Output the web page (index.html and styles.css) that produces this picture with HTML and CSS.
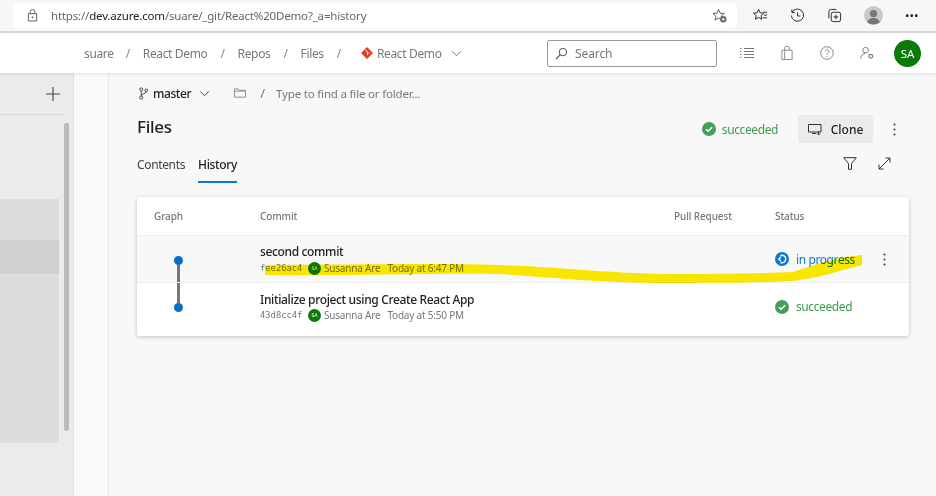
FILE: index.html
```html
<!DOCTYPE html>
<html lang="en">
<head>
<meta charset="utf-8">
<title>History</title>
<link rel="stylesheet" href="styles.css">
</head>
<body>
<div class="page">
  <header class="browser">
    <div class="address">
      <svg class="ico lock" viewBox="0 0 12 14"><path d="M1.5 5h9v8h-9zM3.5 5V3a2.5 2.5 0 0 1 5 0v2" fill="none" stroke="#555" stroke-width="1"/><circle cx="6" cy="9" r="1" fill="#555"/></svg>
      <span class="url">https://<b>dev.azure.com</b>/suare/_git/React%20Demo?_a=history</span>
      <svg class="ico favadd" viewBox="0 0 16 16"><path d="M7 1.5l1.8 4 4.2.4-3.2 2.8 1 4.2L7 10.7 3.2 12.9l1-4.2L1 5.9l4.2-.4z" fill="none" stroke="#555"/><circle cx="12" cy="12" r="3.4" fill="#666"/><path d="M10.3 12h3.4M12 10.3v3.4" stroke="#fff" stroke-width=".9"/></svg>
    </div>
    <div class="browser-tools">
      <svg class="tool" viewBox="0 0 16 16"><path d="M6 1.5l1.6 3.6 3.9.4-2.9 2.6.8 3.9L6 10l-3.4 2 .8-3.9L.5 5.5l3.9-.4z" fill="none" stroke="#222"/><path d="M11 4.5h4M11.5 7.5h3.5M10.500 10.500h4.500" stroke="#222"/></svg>
      <svg class="tool" viewBox="0 0 16 16"><path d="M2.300 4.500A6.500 6.500 0 1 1 1.500 8M2 1.500v3.200h3.200M8 4.500V8.500h3" fill="none" stroke="#222"/></svg>
      <svg class="tool" viewBox="0 0 16 16"><path d="M2 11V4a2.500 2.500 0 0 1 2.500-2.500H10" fill="none" stroke="#222"/><rect x="4.500" y="4.500" width="10" height="10" rx="2" fill="none" stroke="#222"/><path d="M9.500 7v5M7 9.500h5" stroke="#222"/></svg>
      <span class="profile"><svg viewBox="0 0 20 20"><circle cx="10" cy="10" r="10" fill="#c9c9c9"/><circle cx="10" cy="8" r="3.800" fill="#777"/><path d="M3.500 17c.8-3.500 3.500-4.500 6.500-4.500s5.700 1 6.500 4.500a10 10 0 0 1-13 0z" fill="#777"/></svg></span>
      <span class="dots">···</span>
    </div>
  </header>

  <nav class="topnav">
    <div class="crumbs">
      <span>suare</span><i>/</i><span>React Demo</span><i>/</i><span>Repos</span><i>/</i><span>Files</span><i>/</i>
      <span class="repo">
        <svg class="gitlogo" viewBox="0 0 12 12"><path d="M6 0l6 6-6 6-6-6z" fill="#e2401f"/><path d="M4 2.500l2.500 2.500v3M6.500 5l1.800 1.800" fill="none" stroke="#fff" stroke-width="1"/></svg>
        React Demo
      </span>
      <svg class="chev" viewBox="0 0 12 8"><path d="M1 1.500l5 5 5-5" fill="none" stroke="#666"/></svg>
    </div>
    <div class="search">
      <svg class="search-ico" viewBox="0 0 14 14"><circle cx="8.500" cy="5.500" r="4" fill="none" stroke="#444"/><path d="M5.500 8.500L1 13" stroke="#444" stroke-width="1.200"/></svg>
      <span>Search</span>
    </div>
    <div class="nav-icons">
      <svg class="nav-ico" viewBox="0 0 14 12"><path d="M4 1.500h10M4 4.500h10M4 7.500h10M4 10.500h10" stroke="#777"/><path d="M0 1.500h2M0 4.500h2M0 7.500h2M0 10.500h2" stroke="#777" stroke-dasharray="1 .500"/></svg>
      <svg class="nav-ico" viewBox="0 0 12 15"><path d="M.500 4.500h11v10H.500zM3.500 4.500V2a1.500 1.500 0 0 1 1.500-1.500h2A1.500 1.500 0 0 1 8.500 2v2.500M3.500 4.500v10" fill="none" stroke="#888"/></svg>
      <svg class="nav-ico" viewBox="0 0 14 14"><circle cx="7" cy="7" r="6.300" fill="none" stroke="#888"/><path d="M5.200 5.500a1.800 1.800 0 1 1 2.800 1.500c-.7.500-1 .8-1 1.600" fill="none" stroke="#888"/><circle cx="7" cy="10.300" r=".6" fill="#888"/></svg>
      <svg class="nav-ico" viewBox="0 0 15 14"><circle cx="6" cy="4" r="3" fill="none" stroke="#777"/><path d="M.700 13c.3-3.500 2.500-5.500 5.300-5.500" fill="none" stroke="#777"/><circle cx="11.500" cy="10.500" r="2" fill="none" stroke="#777" stroke-width="1.300"/></svg>
      <span class="avatar">SA</span>
    </div>
  </nav>

  <div class="body">
    <aside class="sidebar">
      <div class="side-head"><svg class="plus" viewBox="0 0 14 14"><path d="M7 0v14M0 7h14" stroke="#444" stroke-width="1.100"/></svg></div>
      <div class="side-main">
        <div class="tree">
          <div class="tree-top"></div>
          <div class="tree-sel"></div>
        </div>
        <div class="scrollbar"></div>
      </div>
    </aside>
    <div class="strip"></div>
    <main class="content">
      <div class="branch-row">
        <svg class="branch-ico" viewBox="0 0 10 14"><circle cx="2.500" cy="2.500" r="1.700" fill="none" stroke="#333"/><circle cx="2.500" cy="11.500" r="1.700" fill="none" stroke="#333"/><circle cx="8" cy="3.500" r="1.500" fill="none" stroke="#333"/><path d="M2.500 4.500v5M8 5c0 2.500-5.500 2-5.500 4.500" fill="none" stroke="#333"/></svg>
        <span class="branch">master</span>
        <svg class="chev branch-chev" viewBox="0 0 12 8"><path d="M1 1.500l5 5 5-5" fill="none" stroke="#333"/></svg>
        <svg class="folder" viewBox="0 0 13 10"><path d="M.500 9.500v-9h4l1 1.500h7v7.500z" fill="none" stroke="#888"/><path d="M.500 3h12" stroke="#888"/></svg>
        <i class="slash">/</i>
        <span class="pathfind">Type to find a file or folder...</span>
      </div>

      <div class="title-row">
        <h1>Files</h1>
        <div class="title-actions">
          <svg class="status-ico" viewBox="0 0 14 14"><circle cx="7" cy="7" r="7" fill="#4a9e5c"/><path d="M4 7.300l2.100 2 4-4" fill="none" stroke="#fff" stroke-width="1.500"/></svg>
          <span class="ok">succeeded</span>
          <button class="clone">
            <svg class="clone-ico" viewBox="0 0 14 11"><path d="M.500.500h12.500v7.500H.500z" fill="none" stroke="#333"/><path d="M4 9.500h4M10.500 7v3.500M9 9.500l1.500 1.500 1.500-1.500" stroke="#333" fill="none"/></svg>
            Clone
          </button>
          <svg class="vdots" viewBox="0 0 3 13"><circle cx="1.500" cy="1.500" r="1" fill="#333"/><circle cx="1.500" cy="6.500" r="1" fill="#333"/><circle cx="1.500" cy="11.500" r="1" fill="#333"/></svg>
        </div>
      </div>

      <div class="tab-row">
        <div class="tabs">
          <span class="tab">Contents</span>
          <span class="tab active">History</span>
        </div>
        <div class="tab-tools">
          <svg class="funnel" viewBox="0 0 14 13"><path d="M.700.700h12.600L8.500 6.500v5.800h-3V6.500z" fill="none" stroke="#333"/></svg>
          <svg class="expand" viewBox="0 0 13 13"><path d="M1 12L12 1M7.500 1H12v4.500M1 7.500V12h4.500" fill="none" stroke="#333"/></svg>
        </div>
      </div>

      <section class="card">
        <div class="row head">
          <span>Graph</span><span>Commit</span><span>Pull Request</span><span>Status</span><span></span>
        </div>
        <div class="row commit hover">
          <div class="graph"><span class="node"></span><span class="edge edge-down"></span></div>
          <div class="info">
            <div class="msg">second commit</div>
            <div class="meta"><code>fee26ac4</code><span class="mini">SA</span><span class="who">Susanna Are</span><span>Today at 6:47 PM</span></div>
          </div>
          <span></span>
          <div class="state progress">
            <svg class="status-ico" viewBox="0 0 14 14"><circle cx="7" cy="7" r="7" fill="#0a78d7"/><path d="M5.500 3.500A3.800 3.800 0 1 1 5.500 10.500" fill="none" stroke="#fff" stroke-width="1.400"/><path d="M6 4.800L3.800 7 6 9.200" fill="none" stroke="#fff" stroke-width="1.300"/></svg>
            <span>in progress</span>
          </div>
          <svg class="vdots" viewBox="0 0 3 13"><circle cx="1.500" cy="1.500" r="1" fill="#333"/><circle cx="1.500" cy="6.500" r="1" fill="#333"/><circle cx="1.500" cy="11.500" r="1" fill="#333"/></svg>
        </div>
        <div class="row commit last">
          <div class="graph"><span class="edge edge-up"></span><span class="node"></span></div>
          <div class="info">
            <div class="msg">Initialize project using Create React App</div>
            <div class="meta"><code>43d8cc4f</code><span class="mini">SA</span><span class="who">Susanna Are</span><span>Today at 5:50 PM</span></div>
          </div>
          <span></span>
          <div class="state done">
            <svg class="status-ico" viewBox="0 0 14 14"><circle cx="7" cy="7" r="7" fill="#4a9e5c"/><path d="M4 7.300l2.100 2 4-4" fill="none" stroke="#fff" stroke-width="1.500"/></svg>
            <span>succeeded</span>
          </div>
          <span></span>
        </div>
      </section>
    </main>
  </div>

  <svg class="marker" viewBox="0 0 936 496"><path d="M265 265C340 265 430 263 500 265C560 267 610 274 680 274C730 274 770 273 793 272C815 265 835 257 862 255L862 265C840 270 825 277 793 281C750 283 720 283 680 283C610 284 560 278 500 274C430 273 340 276 265 275Z" fill="#ffec00"/></svg>
</div>
</body>
</html>
```

FILE: styles.css
```css
* { box-sizing: border-box; }
html, body { margin: 0; padding: 0; }
body { font-family: "Noto Sans", "Open Sans", sans-serif; color: #222; background: #f8f8f8; }
.page { position: relative; width: 936px; height: 496px; overflow: hidden; display: flex; flex-direction: column; }
svg { display: block; flex: none; }

.browser { height: 33px; flex: none; display: flex; align-items: center; background: #f7f7f7; border-bottom: 2px solid #d9d9d9; padding: 0 0 1px 13px; }
.address { width: 724px; height: 25px; background: #fff; border-radius: 4px; display: flex; align-items: center; padding: 0 10px 0 14px; }
.lock { width: 11px; height: 13px; }
.url { font-size: 11.5px; letter-spacing: -.18px; color: #666; margin-left: 13px; flex: 1; white-space: nowrap; }
.url b { font-weight: 400; color: #222; }
.favadd { width: 15px; height: 15px; }
.browser-tools { display: flex; align-items: center; margin-left: 16px; }
.tool { width: 15px; height: 15px; margin-right: 22px; }
.profile { width: 19px; height: 19px; }
.dots { font-size: 16px; font-weight: 700; line-height: 1; margin-left: 22px; color: #222; }

.topnav { height: 40px; flex: none; display: flex; align-items: center; background: #fff; box-shadow: 0 1px 3px rgba(0,0,0,.1); position: relative; padding-left: 84px; }
.crumbs { display: flex; align-items: center; font-size: 12px; letter-spacing: -.35px; color: #777; flex: none; width: 463px; }
.crumbs i { font-style: normal; margin: 0 13px; color: #888; }
.crumbs i:first-of-type { margin-left: 12px; }
.repo { display: flex; align-items: center; margin-left: 7px; }
.gitlogo { width: 12px; height: 12px; margin-right: 4px; }
.chev { width: 11px; height: 7px; margin-left: 9px; }
.search { width: 170px; height: 27px; border: 1px solid #999; border-radius: 2px; display: flex; align-items: center; padding-left: 7px; font-size: 12px; letter-spacing: -.1px; color: #777; }
.search-ico { width: 13px; height: 13px; margin-right: 7px; }
.nav-icons { display: flex; align-items: center; margin-left: 23px; }
.nav-ico { width: 14px; height: 14px; margin-right: 26px; }
.avatar { width: 27px; height: 27px; border-radius: 50%; background: #0b7a0b; color: #fff; font-size: 11.5px; display: flex; align-items: center; justify-content: center; margin-left: -6px; }

.body { flex: 1; display: flex; min-height: 0; }
.sidebar { width: 74px; flex: none; background: #ebebeb; border-right: 1px solid #dedede; display: flex; flex-direction: column; }
.side-head { height: 42px; flex: none; margin-right: 8px; border-bottom: 1px solid #d8d8d8; display: flex; align-items: center; justify-content: flex-end; padding-right: 5px; }
.plus { width: 14px; height: 14px; }
.side-main { flex: 1; display: flex; position: relative; }
.tree { width: 59px; height: 244px; margin-top: 84px; background: #ddd; }
.tree-top { height: 41px; }
.tree-sel { height: 34px; background: #d0d0d0; }
.scrollbar { width: 5px; height: 308px; margin: 8px 0 0 5px; background: #bbb; border-radius: 2px; }

.strip { width: 35px; flex: none; background: #fafafa; border-right: 1px solid #e9e9e9; }

.content { flex: 1; padding: 0 27px 0 28px; background: #f8f8f8; }
.branch-row { height: 39px; display: flex; align-items: center; padding-top: 1px; }
.branch-ico { width: 9px; height: 13px; margin: 0 5px 0 2px; }
.branch { font-size: 12px; font-weight: 500; letter-spacing: -.4px; color: #222; }
.branch-chev { margin-left: 8px; }
.folder { width: 12px; height: 10px; margin-left: 24px; }
.slash { font-style: normal; font-size: 13px; color: #777; margin: 0 11px 0 14px; }
.pathfind { font-size: 11.5px; letter-spacing: -.18px; color: #777; }

.title-row { height: 30px; display: flex; align-items: center; justify-content: space-between; }
h1 { margin: 0 0 2px; font-size: 17px; font-weight: 500; letter-spacing: -.3px; color: #222; }
.title-actions { display: flex; align-items: center; padding-top: 4px; }
.status-ico { width: 14px; height: 14px; }
.ok { font-size: 12px; letter-spacing: -.4px; color: #3f9a50; margin-left: 6px; }
.clone { width: 75px; height: 28px; margin-left: 20px; border: 0; border-radius: 2px; background: #ebebeb; display: flex; align-items: center; justify-content: center; gap: 9px; font: 500 12px "Noto Sans", sans-serif; color: #222; padding: 0; }
.clone-ico { width: 14px; height: 11px; }
.vdots { width: 3px; height: 13px; }
.title-actions .vdots { margin: 0 13px 0 20px; }

.tab-row { height: 55px; display: flex; align-items: flex-start; justify-content: space-between; }
.tabs { display: flex; gap: 13px; height: 41px; }
.tab { font-size: 12px; letter-spacing: -.35px; color: #444; height: 41px; padding-top: 14px; }
.tab.active { font-weight: 500; color: #222; border-bottom: 2px solid #0a78d7; }
.tab-tools { display: flex; align-items: center; gap: 21px; padding: 15px 18px 0 0; }
.funnel { width: 14px; height: 13px; }
.expand { width: 13px; height: 13px; }

.card { width: 772px; height: 139px; background: #fff; border-radius: 3px; box-shadow: 0 1px 4px rgba(0,0,0,.22); overflow: hidden; }
.row { display: grid; grid-template-columns: 123px 414px 101px 100px 34px; align-items: center; }
.head { height: 39px; font-size: 10px; letter-spacing: -.12px; color: #777; font-weight: 500; border-bottom: 1px solid #eee; }
.head span:first-child { padding-left: 17px; }
.commit { height: 47px; }
.hover { background: #f8f8f8; border-bottom: 1px solid #eee; }
.last { height: 53px; align-items: start; }
.graph { width: 82px; height: 100%; display: flex; flex-direction: column; align-items: center; }
.hover .graph { padding-top: 20px; }
.node { width: 9px; height: 9px; border-radius: 50%; background: #0a6fc4; flex: none; }
.edge { width: 3px; flex: 1; background: #777; }
.edge-up { flex: none; height: 20px; }
.info { min-width: 0; }
.hover .info { padding-top: 1px; }
.last .info { padding-top: 9px; }
.msg { font-size: 12px; font-weight: 500; letter-spacing: -.35px; color: #222; line-height: 16px; }
.meta { display: flex; align-items: center; font-size: 10px; letter-spacing: -.2px; color: #777; height: 14px; white-space: nowrap; }
.hover .meta { margin-top: 1px; }
.meta code { font-family: "DejaVu Sans Mono", monospace; font-size: 8.8px; letter-spacing: 0; width: 48px; }
.mini { width: 13px; height: 13px; border-radius: 50%; background: #0b7a0b; color: #fff; font-size: 5px; letter-spacing: 0; display: flex; align-items: center; justify-content: center; margin-right: 3px; }
.who { margin-right: 7px; }
.state { display: flex; align-items: center; gap: 7px; font-size: 12px; letter-spacing: -.4px; }
.last .state { padding-top: 15px; }
.progress { color: #0a78d7; }
.done { color: #3f9a50; }
.commit > .vdots { margin-left: 8px; }

.marker { position: absolute; left: 0; top: 0; width: 936px; height: 496px; mix-blend-mode: multiply; pointer-events: none; }
```
